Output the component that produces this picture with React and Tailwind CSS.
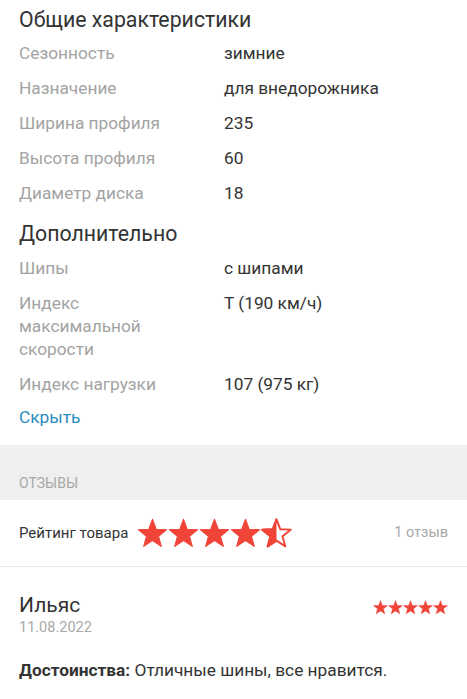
import React from 'react';

const STAR = 'M12 1L14.88 8.64 23.03 9.02 16.66 14.11 18.82 21.98 12 17.5 5.18 21.98 7.34 14.11 0.97 9.02 9.12 8.64Z';

const StarShape = ({ size, fill = 'full' }) => (
  <svg width={size} height={size} viewBox="0 0 24 24" className="shrink-0">
    {fill === 'half' ? (
      <>
        <defs>
          <clipPath id="half-left">
            <rect x="0" y="0" width="12" height="24" />
          </clipPath>
        </defs>
        <path d={STAR} fill="none" stroke="#f04438" strokeWidth="1.5" strokeLinejoin="round" />
        <path d={STAR} fill="#f04438" stroke="#f04438" strokeWidth="1.5" strokeLinejoin="round" clipPath="url(#half-left)" />
      </>
    ) : (
      <path d={STAR} fill="#f04438" stroke="#f04438" strokeWidth="0.8" strokeLinejoin="round" />
    )}
  </svg>
);

const specs = [
  { label: 'Сезонность', value: 'зимние' },
  { label: 'Назначение', value: 'для внедорожника' },
  { label: 'Ширина профиля', value: '235' },
  { label: 'Высота профиля', value: '60' },
  { label: 'Диаметр диска', value: '18' },
];

const extra = [
  { label: 'Шипы', value: 'с шипами' },
  { label: 'Индекс максимальной скорости', value: 'T (190 км/ч)' },
  { label: 'Индекс нагрузки', value: '107 (975 кг)' },
];

const SpecRow = ({ label, value }) => (
  <div className="flex py-[6px] text-[17.3px] leading-[23px]">
    <div className="w-[205px] shrink-0 pr-[25px] text-[#a3a3a3]">{label}</div>
    <div className="text-[#333333]">{value}</div>
  </div>
);

export default function App() {
  return (
    <div className="w-[467px] min-h-[699px] bg-white font-['Roboto',sans-serif]">
      {/* Характеристики */}
      <div className="px-[19px] pt-[6px] pb-[13px]">
        <h2 className="text-[21.3px] leading-[28px] text-[#333333]">Общие характеристики</h2>
        <div className="pt-[2px]">
          {specs.map((s) => (
            <SpecRow key={s.label} {...s} />
          ))}
        </div>
        <h2 className="mt-[9px] text-[21.3px] leading-[28px] text-[#333333]">Дополнительно</h2>
        <div className="pt-[3px]">
          {extra.map((s) => (
            <SpecRow key={s.label} {...s} />
          ))}
        </div>
        <button className="py-[3px] text-[17.3px] leading-[24px] text-[#2a8bbf]">Скрыть</button>
      </div>

      {/* Отзывы */}
      <div className="flex h-[55px] items-end bg-[#efefef] px-[19px] pb-[7px]">
        <span className="text-[14px] uppercase leading-[20px] text-[#a8a8a8]">Отзывы</span>
      </div>
      <div className="flex h-[67px] items-center border-b border-[#ebebeb] px-[19px]">
        <span className="text-[15px] text-[#333333]">Рейтинг товара</span>
        <div className="ml-[9px] flex items-center">
          <StarShape size={31} />
          <StarShape size={31} />
          <StarShape size={31} />
          <StarShape size={31} />
          <StarShape size={31} fill="half" />
        </div>
        <span className="ml-auto text-[14.5px] text-[#a8a8a8]">1 отзыв</span>
      </div>

      <div className="px-[19px] pt-[25px]">
        <div className="flex items-start justify-between">
          <div>
            <div className="text-[21px] leading-[26px] text-[#333333]">Ильяс</div>
            <div className="text-[14.5px] leading-[20px] text-[#a8a8a8]">11.08.2022</div>
          </div>
          <div className="mt-[8px] flex">
            {[0, 1, 2, 3, 4].map((i) => (
              <StarShape key={i} size={15} />
            ))}
          </div>
        </div>
        <p className="mt-[20px] text-[17.3px] leading-[24px] text-[#333333]">
          <span className="font-bold">Достоинства:</span> Отличные шины, все нравится.
        </p>
      </div>
    </div>
  );
}
